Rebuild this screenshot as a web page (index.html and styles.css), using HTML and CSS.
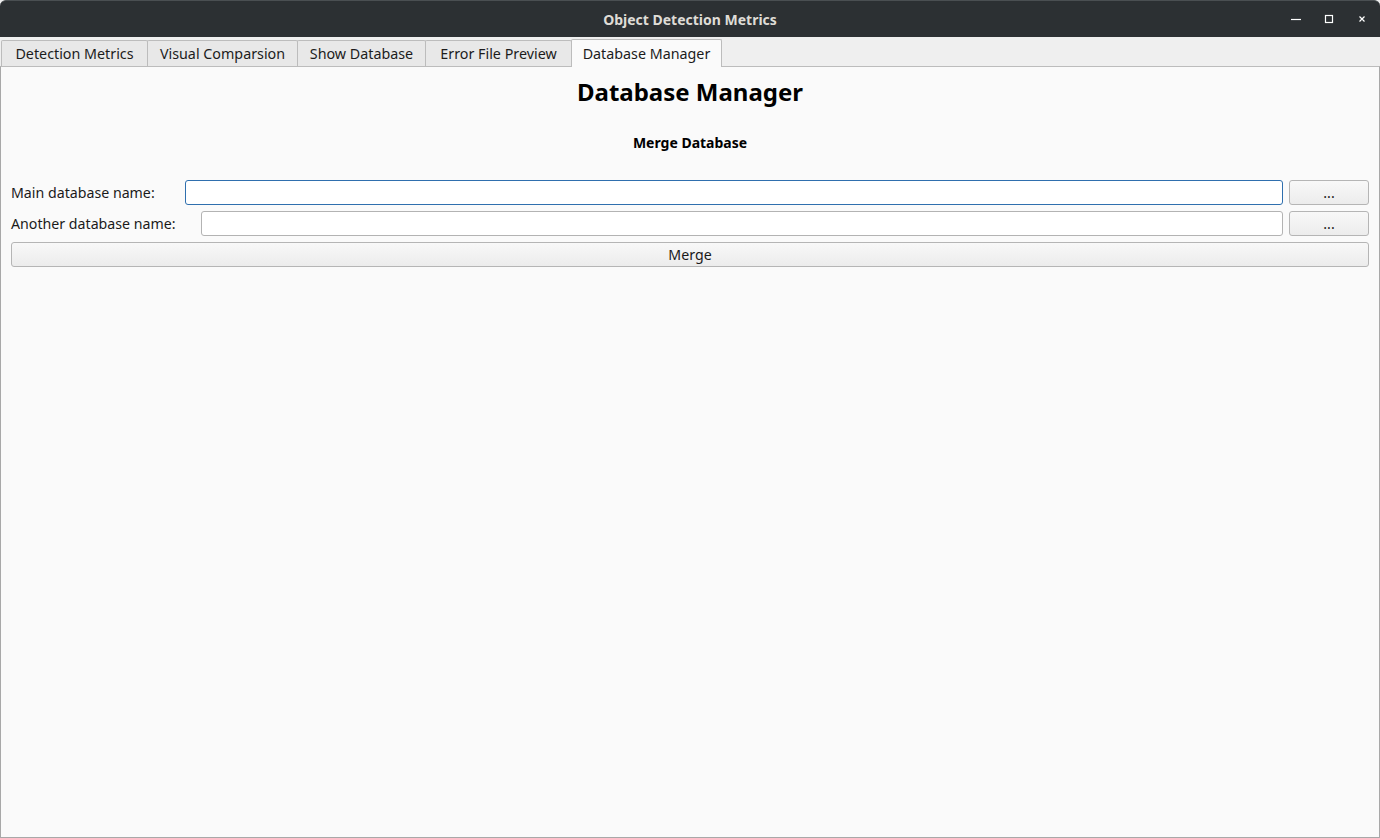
FILE: index.html
```html
<!DOCTYPE html>
<html>
<head>
<meta charset="utf-8">
<link rel="stylesheet" href="styles.css">
</head>
<body>
<div class="window">
  <div class="titlebar">
    <div class="title">Object Detection Metrics</div>
    <div class="controls">
      <svg class="ctl" width="14" height="14" viewBox="0 0 14 14"><line x1="2" y1="7.5" x2="12" y2="7.5" stroke="#ffffff" stroke-width="1.2"/></svg>
      <svg class="ctl" width="14" height="14" viewBox="0 0 14 14"><rect x="3.5" y="3.5" width="7" height="7" fill="none" stroke="#ffffff" stroke-width="1.2"/></svg>
      <svg class="ctl" width="14" height="14" viewBox="0 0 14 14"><path d="M4.5 4.5 L9.5 9.5 M9.5 4.5 L4.5 9.5" stroke="#ffffff" stroke-width="1.2"/></svg>
    </div>
  </div>
  <div class="tabbar">
    <div class="tab tab-metrics">Detection Metrics</div>
    <div class="tab tab-visual">Visual Comparsion</div>
    <div class="tab tab-show">Show Database</div>
    <div class="tab tab-error">Error File Preview</div>
    <div class="tab tab-manager active">Database Manager</div>
  </div>
  <div class="panel">
    <h1 class="heading">Database Manager</h1>
    <h2 class="subheading">Merge Database</h2>
    <div class="row first">
      <label class="lbl lbl-main">Main database name:</label>
      <input class="field focused" type="text">
      <button class="btn small">...</button>
    </div>
    <div class="row">
      <label class="lbl lbl-other">Another database name:</label>
      <input class="field" type="text">
      <button class="btn small">...</button>
    </div>
    <button class="btn wide">Merge</button>
  </div>
</div>
</body>
</html>
```
FILE: styles.css
```css
* { box-sizing: border-box; }
html, body { margin: 0; padding: 0; }
body {
  width: 1380px;
  height: 838px;
  background: #efefef;
  font-family: "Noto Sans", "Open Sans", sans-serif;
  font-size: 14px;
  color: #1a1a1a;
  overflow: hidden;
}
.window {
  display: flex;
  flex-direction: column;
  height: 838px;
}
.titlebar {
  height: 37px;
  background: #2c3033;
  border-top: 1px solid #4a4f52;
  border-radius: 6px 6px 0 0;
  position: relative;
  display: flex;
  align-items: center;
  justify-content: center;
  flex-shrink: 0;
}
.title {
  color: #dfdcd6;
  font-weight: bold;
  font-size: 14px;
}
.controls {
  position: absolute;
  right: 11px;
  top: 11px;
  display: flex;
  gap: 19px;
}
.ctl { display: block; }
.tabbar {
  height: 29px;
  display: flex;
  align-items: flex-end;
  padding-left: 1px;
  flex-shrink: 0;
  position: relative;
  z-index: 1;
}
.tab {
  height: 26px;
  padding: 0 0 1px;
  display: flex;
  align-items: center;
  justify-content: center;
  background: #e8e8e8;
  border: 1px solid #bcbcbc;
  border-bottom: none;
  border-radius: 2px 2px 0 0;
  margin-right: -1px;
  font-size: 14.3px;
  color: #1c1c1c;
  white-space: nowrap;
  flex-shrink: 0;
}
.tab-metrics { width: 147px; }
.tab-visual { width: 151px; }
.tab-show { width: 129px; }
.tab-error { width: 147px; }
.tab-manager { width: 151px; }
.tab.active {
  height: 28px;
  background: #fafafa;
  margin-bottom: -1px;
}
.panel {
  flex: 1;
  background: #fafafa;
  border: 1px solid #a8a8a8;
  border-top-color: #bcbcbc;
  display: flex;
  flex-direction: column;
  padding: 0 10px;
}
.heading {
  margin: 10px 0 0;
  text-align: center;
  font-size: 24px;
  font-weight: bold;
  color: #000;
  line-height: 30px;
}
.subheading {
  margin: 26px 0 0;
  text-align: center;
  font-size: 14px;
  font-weight: bold;
  color: #000;
  line-height: 20px;
}
.row {
  display: flex;
  align-items: center;
  gap: 6px;
  height: 25px;
  margin-top: 6px;
}
.row.first { margin-top: 27px; }
.lbl {
  font-size: 14.2px;
  color: #1a1a1a;
  white-space: nowrap;
  flex-shrink: 0;
}
.lbl-main { width: 168px; }
.lbl-other { width: 184px; }
.field {
  flex: 1;
  height: 25px;
  border: 1px solid #b3b3b3;
  border-radius: 3px;
  background: #fff;
  outline: none;
  font-family: inherit;
}
.field.focused {
  border-color: #2f6fae;
}
.btn {
  height: 25px;
  border: 1px solid #b5b5b5;
  border-radius: 3px;
  background: linear-gradient(#f8f8f8, #ececec);
  font-family: inherit;
  font-size: 14.2px;
  color: #1a1a1a;
  padding: 0;
}
.btn.small {
  width: 80px;
  flex-shrink: 0;
}
.btn.wide {
  margin-top: 6px;
  width: 100%;
}
```
